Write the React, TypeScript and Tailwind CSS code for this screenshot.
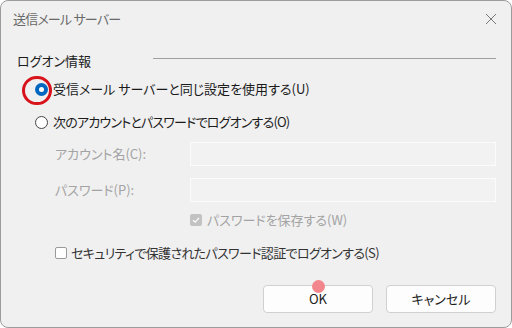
import React from 'react';

const font = { fontFamily: '"Noto Sans CJK JP", "Noto Sans", sans-serif' };

const Radio: React.FC<{ checked?: boolean }> = ({ checked }) =>
    checked ? (
        <span className="w-[13px] h-[13px] rounded-full bg-[#0067c0] flex items-center justify-center shrink-0">
            <span className="w-[5px] h-[5px] rounded-full bg-white" />
        </span>
    ) : (
        <span className="w-[13px] h-[13px] rounded-full border border-[#444] bg-white shrink-0" />
    );

const App: React.FC = () => {
    return (
        <div className="w-[512px] h-[328px] bg-white relative overflow-hidden [font-feature-settings:'palt']" style={font}>
            <div className="h-full flex flex-col bg-[#f0f0f0] border border-[#9c9c9c] rounded-lg">
                {/* タイトルバー */}
                <div className="h-[35px] flex items-center justify-between pl-[12px] pr-[14px] shrink-0">
                    <span className="text-[13px] tracking-[-0.8px] text-[#6a6a6a]">送信メール サーバー</span>
                    <svg width="12" height="12" viewBox="0 0 12 12" className="text-[#777]">
                        <path d="M1 1 L11 11 M11 1 L1 11" stroke="currentColor" strokeWidth="1" />
                    </svg>
                </div>

                <div className="flex flex-col pl-[16px] pr-[15px] text-[13px] text-[#1b1b1b]">
                    {/* ログオン情報 */}
                    <div className="h-[22px] mt-[14px] flex items-center">
                        <span>ログオン情報</span>
                        <div className="flex-1 h-px bg-[#a0a0a0] ml-[62px] -mt-[6px]" />
                    </div>

                    <div className="h-[22px] mt-[6px] flex items-center gap-[5px] pl-[18px]">
                        <Radio checked />
                        <span>受信メール サーバーと同じ設定を使用する(U)</span>
                    </div>
                    <div className="h-[22px] mt-[11px] flex items-center gap-[5px] pl-[18px]">
                        <Radio />
                        <span className="tracking-[-0.8px]">次のアカウントとパスワードでログオンする(O)</span>
                    </div>

                    {/* アカウント */}
                    <div className="grid grid-cols-[135px_1fr] gap-y-[12px] mt-[9px] pl-[38px] text-[#a3a3a3]">
                        <span className="h-[24px] flex items-center">アカウント名(C):</span>
                        <div className="h-[24px] border border-[#fbfbfb] bg-[#f2f2f2]" />
                        <span className="h-[24px] flex items-center">パスワード(P):</span>
                        <div className="h-[24px] border border-[#fbfbfb] bg-[#f2f2f2]" />
                    </div>

                    <div className="h-[20px] mt-[8px] flex items-center gap-[5px] pl-[173px] text-[#a3a3a3]">
                        <span className="w-[12px] h-[12px] rounded-[2px] bg-[#c2c2c2] flex items-center justify-center">
                            <svg width="8" height="8" viewBox="0 0 8 8">
                                <path d="M1 4.2 L3.2 6.2 L7 1.8" fill="none" stroke="white" strokeWidth="1.2" />
                            </svg>
                        </span>
                        <span>パスワードを保存する(W)</span>
                    </div>

                    <div className="h-[20px] mt-[13px] flex items-center gap-[4px] pl-[38px] text-[#333]">
                        <span className="w-[12px] h-[12px] rounded-[2px] border border-[#9a9a9a] bg-white" />
                        <span className="tracking-[-0.65px]">セキュリティで保護されたパスワード認証でログオンする(S)</span>
                    </div>

                    {/* ボタン */}
                    <div className="flex justify-end gap-[13px] mt-[22px]">
                        <button className="w-[110px] h-[28px] bg-[#fdfdfd] border border-[#d0d0d0] rounded-[4px] text-[13px] text-[#1b1b1b]">
                            OK
                        </button>
                        <button className="w-[110px] h-[28px] bg-[#fdfdfd] border border-[#d0d0d0] rounded-[4px] text-[13px] text-[#1b1b1b]">
                            キャンセル
                        </button>
                    </div>
                </div>
            </div>

            {/* 注記 */}
            <div className="absolute left-[22px] top-[76px] w-[30px] h-[29px] rounded-full border-[3px] border-[#d8131b]" />
            <div className="absolute left-[312px] top-[280px] w-[13px] h-[13px] rounded-full bg-[#f3868d]" />
        </div>
    );
};

export default App;
